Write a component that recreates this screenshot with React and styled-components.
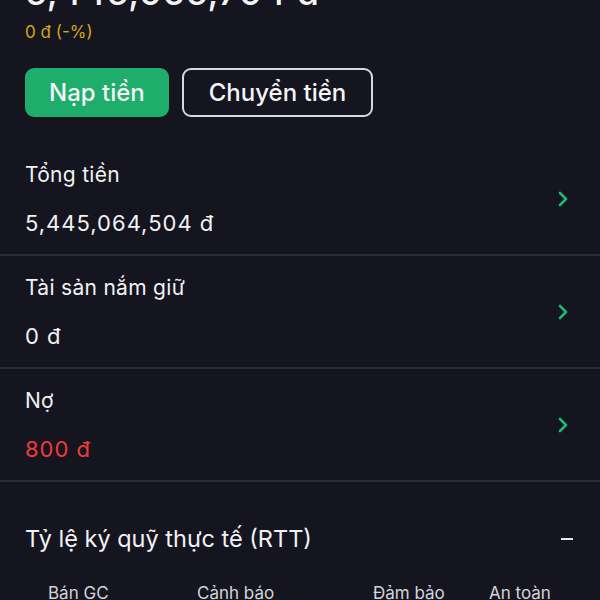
import React from 'react';
import styled, { createGlobalStyle } from 'styled-components';

const GlobalStyle = createGlobalStyle`
	html, body {
		margin: 0;
		padding: 0;
		background: #15151f;
	}
	body {
		font-family: Inter, 'Noto Sans', sans-serif;
		color: #f2f2f5;
	}
`;

const Screen = styled.div`
	width: 600px;
	height: 600px;
	overflow: hidden;
	background: #15151f;
`;

// content is scrolled up, the balance is cut at the top edge
const Scroller = styled.div`
	margin-top: -28px;
`;

const Summary = styled.section`
	padding: 0 25px;
`;

const Balance = styled.div`
	font-size: 36px;
	font-weight: 500;
	line-height: 40px;
	letter-spacing: 0.5px;
`;

const Change = styled.div`
	margin-top: 10px;
	font-size: 17px;
	line-height: 20px;
	color: #d6a41c;
`;

const Actions = styled.div`
	display: flex;
	gap: 13px;
	margin-top: 26px;
	margin-bottom: 26px;
`;

const Button = styled.button`
	height: 49px;
	padding: 0 ${(p) => (p.$primary ? '22px' : '25px')};
	border-radius: 9px;
	font-family: inherit;
	font-size: 24px;
	font-weight: 500;
	color: #f4f4f6;
	background: ${(p) => (p.$primary ? '#1fad6b' : 'transparent')};
	border: 2px solid ${(p) => (p.$primary ? '#1fad6b' : '#d8d8dc')};
`;

const Row = styled.div`
	display: flex;
	align-items: center;
	justify-content: space-between;
	height: 111px;
	padding: 0 25px;
	border-bottom: 2px solid #2b2b37;
`;

const RowText = styled.div`
	display: flex;
	flex-direction: column;
	gap: 22px;
`;

const Label = styled.div`
	font-size: 21px;
	line-height: 27px;
	letter-spacing: 0.3px;
`;

const Value = styled.div`
	font-size: 22px;
	line-height: 27px;
	letter-spacing: 1px;
	color: ${(p) => (p.$danger ? '#ef3b3b' : '#f2f2f5')};
`;

const Chevron = styled.svg`
	width: 16px;
	height: 18px;
	margin-right: 4px;
`;

const Ratio = styled.section`
	padding: 42px 25px 0;
`;

const RatioHead = styled.div`
	display: flex;
	align-items: center;
	justify-content: space-between;
	font-size: 23.5px;
	line-height: 30px;
`;

const Dash = styled.span`
	width: 12px;
	height: 2px;
	margin-right: 2px;
	background: #e8e8ec;
`;

const Levels = styled.div`
	display: grid;
	grid-template-columns: 149px 176px 116px 1fr;
	margin-top: 28px;
	padding-left: 23px;
	font-size: 17px;
	line-height: 22px;
	color: #d4d4da;
`;

const rows = [
	{ label: 'Tổng tiền', value: '5,445,064,504 đ' },
	{ label: 'Tài sản nắm giữ', value: '0 đ' },
	{ label: 'Nợ', value: '800 đ', danger: true },
];

const levels = ['Bán GC', 'Cảnh báo', 'Đảm bảo', 'An toàn'];

export default function App() {
	return (
		<Screen>
			<GlobalStyle />
			<Scroller>
				<Summary>
					<Balance>5,445,065,704 đ</Balance>
					<Change>0 đ (-%)</Change>
					<Actions>
						<Button $primary>Nạp tiền</Button>
						<Button>Chuyển tiền</Button>
					</Actions>
				</Summary>
				{rows.map((r) => (
					<Row key={r.label}>
						<RowText>
							<Label>{r.label}</Label>
							<Value $danger={r.danger}>{r.value}</Value>
						</RowText>
						<Chevron viewBox="0 0 16 18" fill="none">
							<path d="M5 3l6 6-6 6" stroke="#1fb872" strokeWidth="2.6" strokeLinecap="round" strokeLinejoin="round" />
						</Chevron>
					</Row>
				))}
				<Ratio>
					<RatioHead>
						<span>Tỷ lệ ký quỹ thực tế (RTT)</span>
						<Dash />
					</RatioHead>
					<Levels>
						{levels.map((l) => (
							<span key={l}>{l}</span>
						))}
					</Levels>
				</Ratio>
			</Scroller>
		</Screen>
	);
}
